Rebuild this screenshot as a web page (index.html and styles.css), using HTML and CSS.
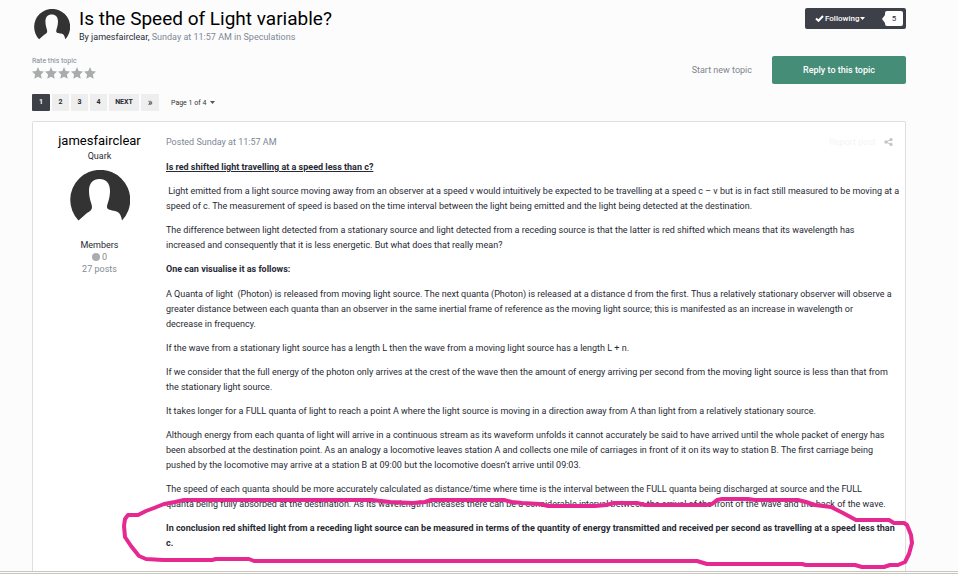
FILE: index.html
```
<!DOCTYPE html>
<html lang="en">
<head>
  <meta charset="UTF-8" />
  <meta name="viewport" content="width=device-width, initial-scale=1.0"/>
  <title>Is the Speed of Light variable?</title>
  <link rel="stylesheet" href="styles.css">
</head>
<body>

<!-- shared shapes -->
<svg class="defs" width="0" height="0" aria-hidden="true">
  <symbol id="avatar" viewBox="0 0 60 60">
    <path fill="#333" d="M8.500 50.500A30 30 0 1 1 52 50.500C51 44 49 42 45 41C41 40 37 40 37 37C37 34 40 29 40 21C40 13 36 9 29.500 9C23 9 19 13 19 21C19 29 22 34 22 37C22 40 20 41 17 43Z"/>
  </symbol>
  <symbol id="star" viewBox="0 0 12 12">
    <path fill="#a9abad" d="M6 0L7.700 3.900L12 4.400L8.900 7.400L9.700 11.800L6 9.700L2.300 11.800L3.100 7.400L0 4.400L4.300 3.900Z"/>
  </symbol>
</svg>

<main class="page">
  <header class="topic-header">
    <svg class="avatar-small"><use href="#avatar"/></svg>
    <div class="topic-title">
      <h1>Is the Speed of Light variable?</h1>
      <p><span class="author">By <a href="#">jamesfairclear</a>,</span> Sunday at 11:57 AM in <a href="#">Speculations</a></p>
    </div>
    <div class="follow">
      <button type="button">
        <svg width="9" height="7" viewBox="0 0 9 7"><path d="M1 3.500L3.500 5.800L8 1" fill="none" stroke="#fff" stroke-width="2"/></svg>
        Following
        <svg width="5" height="3" viewBox="0 0 5 3"><path d="M0 0H5L2.500 3Z" fill="#fff"/></svg>
      </button>
      <a class="count" href="#">5</a>
    </div>
  </header>

  <section class="toolbar">
    <div class="rating">
      <span>Rate this topic</span>
      <div class="stars">
        <svg><use href="#star"/></svg>
        <svg><use href="#star"/></svg>
        <svg><use href="#star"/></svg>
        <svg><use href="#star"/></svg>
        <svg><use href="#star"/></svg>
      </div>
    </div>
    <div class="actions">
      <a href="#">Start new topic</a>
      <button type="button">Reply to this topic</button>
    </div>
  </section>

  <nav class="pagination">
    <a class="active" href="#">1</a>
    <a href="#">2</a>
    <a href="#">3</a>
    <a href="#">4</a>
    <a class="next" href="#">NEXT</a>
    <a class="last" href="#">»</a>
    <button type="button">Page 1 of 4
      <svg width="5" height="3" viewBox="0 0 5 3"><path d="M0 0H5L2.500 3Z" fill="#555"/></svg>
    </button>
  </nav>

  <article class="post">
    <aside class="member">
      <h2><a href="#">jamesfairclear</a></h2>
      <span>Quark</span>
      <svg class="avatar-large"><use href="#avatar"/></svg>
      <span>Members</span>
      <span class="muted"><i class="dot"></i>0</span>
      <span class="muted">27 posts</span>
    </aside>
    <div class="content">
      <div class="meta">
        <a href="#">Posted Sunday at 11:57 AM</a>
        <div class="tools">
          <a href="#">Report post</a>
          <svg width="9" height="8" viewBox="0 0 9 8"><path d="M7 1.500L2 4L7 6.500" fill="none" stroke="#c4c4c4"/><g fill="#c4c4c4"><circle cx="7" cy="1.600" r="1.600"/><circle cx="2" cy="4" r="1.700"/><circle cx="7" cy="6.400" r="1.600"/></g></svg>
        </div>
      </div>
      <div class="body">
        <p><strong><u>Is red shifted light travelling at a speed less than c?</u></strong></p>
        <p>&nbsp;Light emitted from a light source moving away from an observer at a speed v would intuitively be expected to be travelling at a speed c – v but is in fact still measured to be moving at a<br>
        speed of c. The measurement of speed is based on the time interval between the light being emitted and the light being detected at the destination.</p>
        <p>The difference between light detected from a stationary source and light detected from a receding source is that the latter is red shifted which means that its wavelength has<br>
        increased and consequently that it is less energetic. But what does that really mean?</p>
        <p class="subhead"><strong>One can visualise it as follows:</strong></p>
        <p>A Quanta of light&nbsp; (Photon) is released from moving light source. The next quanta (Photon) is released at a distance d from the first. Thus a relatively stationary observer will observe a<br>
        greater distance between each quanta than an observer in the same inertial frame of reference as the moving light source; this is manifested as an increase in wavelength or<br>
        decrease in frequency.</p>
        <p>If the wave from a stationary light source has a length L then the wave from a moving light source has a length L + n.</p>
        <p>If we consider that the full energy of the photon only arrives at the crest of the wave then the amount of energy arriving per second from the moving light source is less than that from<br>
        the stationary light source.</p>
        <p>It takes longer for a FULL quanta of light to reach a point A where the light source is moving in a direction away from A than light from a relatively stationary source.</p>
        <p>Although energy from each quanta of light will arrive in a continuous stream as its waveform unfolds it cannot accurately be said to have arrived until the whole packet of energy has<br>
        been absorbed at the destination point. As an analogy a locomotive leaves station A and collects one mile of carriages in front of it on its way to station B. The first carriage being<br>
        pushed by the locomotive may arrive at a station B at 09:00 but the locomotive doesn’t arrive until 09:03.</p>
        <p>The speed of each quanta should be more accurately calculated as distance/time where time is the interval between the FULL quanta being discharged at source and the FULL<br>
        quanta being fully absorbed at the destination. As its wavelength increases there can be a considerable interval between the arrival of the front of the wave and the back of the wave.</p>
        <p><strong>In conclusion red shifted light from a receding light source can be measured in terms of the quantity of energy transmitted and received per second as travelling at a speed less than<br>
        c.</strong></p>
      </div>
    </div>
    <!-- hand drawn ring round the conclusion -->
    <svg class="marker" viewBox="120 494 796 76">
      <path d="M134 515L128 515L125 519L124 526L125 537L131 546L139 556L146 559L163 560H212L216 559H249L254 561L420 561H697L707 564H802L806 565H855L862 567H884L890 565L898 565L905 562L909 554L912 543L911 535L907 525L904 523H894L889 520L870 520L856 520L843 513L831 507L815 505L806 502L798 500H755L748 499H722L717 500L712 504L706 505H645L637 503L614 503L606 505L595 506H548L540 504L522 503L512 502L504 500H431L425 502L413 503L390 502L372 500H184L175 502L164 504L154 508L146 511L138 515Z"/>
    </svg>
  </article>
</main>
<footer class="window-edge"></footer>

</body>
</html>
```
FILE: styles.css
```
* {
  box-sizing: border-box;
}
body {
  margin: 0;
  background-color: #fcfcfc;
  color: #272a34;
  font-family: Roboto, sans-serif;
  font-size: 9px;
  line-height: 12px;
}
h1, h2, p {
  margin: 0;
  font-weight: 400;
}
a {
  color: inherit;
  text-decoration: none;
}
button {
  border: 0;
  padding: 0;
  font-family: inherit;
  cursor: pointer;
}
svg {
  display: block;
}
.defs {
  position: absolute;
}
.page {
  padding: 8px 52px 0 32px;
}

/* topic header */
.topic-header {
  display: flex;
  align-items: flex-start;
  height: 48px;
}
.avatar-small {
  width: 36px;
  height: 36px;
  margin: 1px 9px 0 2px;
}
.topic-title {
  flex: 1;
}
.topic-title h1 {
  font-size: 19px;
  line-height: 22px;
  color: #000;
}
.topic-title p {
  line-height: 14px;
  color: #7d8795;
}
.topic-title .author {
  color: #272a34;
}
.follow {
  display: flex;
  align-items: center;
  justify-content: space-between;
  width: 101px;
  height: 21px;
  padding: 0 3px 0 10px;
  border-radius: 2px;
  background: #3d4049;
}
.follow button {
  display: flex;
  align-items: center;
  gap: 1px;
  background: none;
  color: #fff;
  font-size: 8px;
  font-weight: 500;
}
.count {
  position: relative;
  width: 18px;
  height: 15px;
  border-radius: 2px;
  background: #fff;
  font-size: 8px;
  line-height: 15px;
  text-align: center;
}
.count::before {
  content: "";
  position: absolute;
  left: -3px;
  top: 4px;
  border: 4px solid transparent;
  border-left: 0;
  border-right: 3px solid #fff;
}

/* rating and actions */
.toolbar {
  display: flex;
  justify-content: space-between;
  height: 38px;
}
.rating {
  color: #7d8795;
  font-size: 7px;
  line-height: 11px;
}
.stars {
  display: flex;
  gap: 1px;
}
.stars svg {
  width: 12px;
  height: 12px;
}
.actions {
  display: flex;
  align-items: center;
  gap: 20px;
  height: 28px;
  color: #7f858d;
}
.actions button {
  width: 134px;
  height: 28px;
  border-radius: 2px;
  background: #458d77;
  color: #fff;
  font-size: 9px;
  font-weight: 500;
}

/* pages */
.pagination {
  display: flex;
  gap: 2px;
  margin-bottom: 10px;
  font-size: 7px;
  font-weight: 700;
  line-height: 17px;
}
.pagination a {
  width: 17px;
  border-radius: 1px;
  background: #eee;
  text-align: center;
}
.pagination .next {
  width: 30px;
}
.pagination .active {
  width: 18px;
  background: #3d4049;
  color: #fff;
}
.pagination .last {
  width: 18px;
  font-size: 10px;
  font-weight: 400;
}
.pagination button {
  display: flex;
  align-items: center;
  gap: 4px;
  margin-left: 10px;
  background: none;
  color: #333;
  font-size: 7px;
}

/* post */
.post {
  position: relative;
  display: flex;
  padding: 10px 4px 11px 0;
  border: 1px solid #dedede;
  border-bottom: 0;
  border-radius: 2px 2px 0 0;
  background: #fff;
}
.member {
  display: flex;
  flex: none;
  flex-direction: column;
  align-items: center;
  width: 133px;
}
.member h2 {
  font-size: 13px;
  line-height: 18px;
  color: #000;
}
.member span {
  line-height: 12px;
}
.avatar-large {
  width: 60px;
  height: 60px;
  margin: 8px 0 9px;
}
.member .muted {
  color: #868b93;
}
.dot {
  display: inline-block;
  width: 8px;
  height: 8px;
  margin-right: 2px;
  border-radius: 50%;
  background: #aaadb0;
  vertical-align: -1px;
}
.content {
  flex: 1;
}
.meta {
  display: flex;
  align-items: center;
  justify-content: space-between;
  height: 20px;
  margin: 0 8px 8px 0;
  color: #7d8795;
}
.tools {
  display: flex;
  align-items: center;
  gap: 8px;
  color: #f5f5f5;
}
.body {
  line-height: 15px;
}
.body p {
  margin-bottom: 9px;
}
.body .subhead {
  margin-bottom: 10px;
}
.marker {
  position: absolute;
  left: 87px;
  bottom: 1px;
  width: 796px;
  height: 76px;
}
.marker path {
  fill: none;
  stroke: #e62891;
  stroke-width: 4;
  stroke-linejoin: round;
}
.window-edge {
  height: 3px;
  border-top: 1px solid #c9c7bd;
  border-bottom: 1px solid #c9c7bd;
}
```
